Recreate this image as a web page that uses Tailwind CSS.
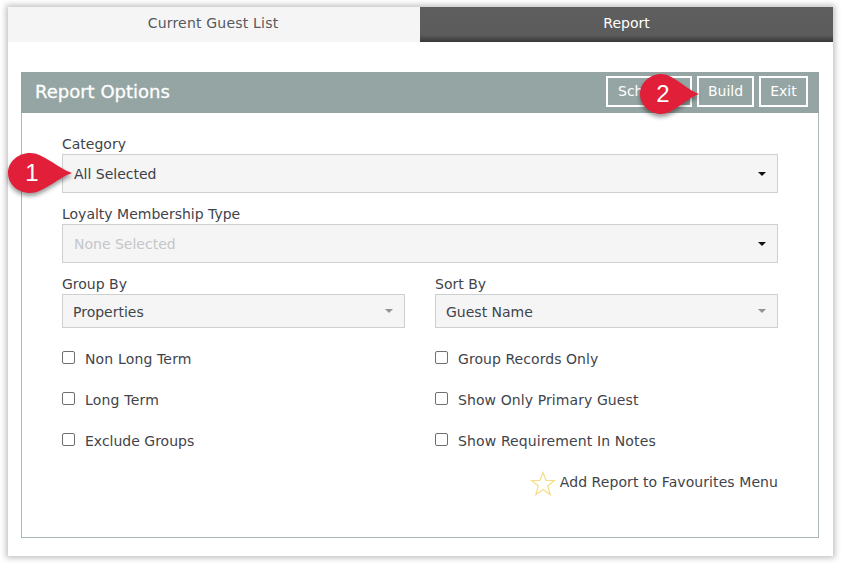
<!DOCTYPE html>
<html>
<head>
<meta charset="utf-8">
<script src="https://cdn.jsdelivr.net/npm/@tailwindcss/browser@4"></script>
</head>
<body class="bg-white w-[841px] h-[564px] overflow-hidden relative font-['DejaVu_Sans',sans-serif] text-[14px] text-[#3f444b]">
<div class="ml-[8px] mt-[7px] w-[825px] h-[549px] absolute bg-white shadow-[0_0_6px_2px_rgba(0,0,0,0.25)]">
  <div class="flex h-[35px]">
    <div class="w-[412px] bg-[#f5f5f5] flex items-center justify-center text-[#55595c] tracking-[0.2px] pb-[2px] pr-[2px]">Current Guest List</div>
    <div class="w-[413px] bg-[linear-gradient(#5e5e5e_0%,#5c5c5c_80%,#3a3637_100%)] flex items-center justify-center text-white pb-[2px]">Report</div>
  </div>
  <div class="ml-[13px] mr-[14px] mt-[30px] h-[466px] border border-[#a9b9b6] flex flex-col">
    <div class="h-[41px] -mx-px -mt-px bg-[#95a5a3] flex items-center pl-[14px] pr-[11px] shrink-0">
      <div class="text-[18px] text-white flex-1 pb-[2px] [-webkit-text-stroke:0.3px_white]">Report Options</div>
      <div class="flex gap-[5px] text-white -mt-[3px]">
        <div class="w-[86px] h-[31px] border-2 border-white flex items-center pl-[10px]">Schedule</div>
        <div class="w-[57px] h-[31px] border-2 border-white flex items-center justify-center">Build</div>
        <div class="w-[49px] h-[31px] border-2 border-white flex items-center justify-center">Exit</div>
      </div>
    </div>
    <div class="px-[40px] pt-[21px]">
      <div class="h-[20px] leading-[20px]">Category</div>
      <div class="h-[39px] bg-[#f5f5f5] border border-[#ccd0d0] flex items-center pl-[11px] pr-[11px] text-[#3a3f46] mb-[11px]">
        <span class="flex-1 pt-[2px]">All Selected</span>
        <svg width="8" height="4" viewBox="0 0 8 4"><path d="M0 0h8L4 4z" fill="#111"/></svg>
      </div>
      <div class="h-[20px] leading-[20px]">Loyalty Membership Type</div>
      <div class="h-[39px] bg-[#f5f5f5] border border-[#ccd0d0] flex items-center pl-[11px] pr-[11px] text-[#c4c6c8] mb-[11px]">
        <span class="flex-1 pt-[2px]">None Selected</span>
        <svg width="8" height="4" viewBox="0 0 8 4"><path d="M0 0h8L4 4z" fill="#111"/></svg>
      </div>
      <div class="grid grid-cols-[343px_343px] gap-x-[30px]">
        <div>
          <div class="h-[20px] leading-[20px]">Group By</div>
          <div class="h-[34px] bg-[#f5f5f5] border border-[#ccd0d0] flex items-center px-[10px] text-[#3f444b]">
            <span class="flex-1 pt-[2px]">Properties</span>
            <svg width="8" height="4" viewBox="0 0 8 4" class="-ml-[1px] mr-[1px]"><path d="M0 0h8L4 4z" fill="#8f9396"/></svg>
          </div>
        </div>
        <div>
          <div class="h-[20px] leading-[20px]">Sort By</div>
          <div class="h-[34px] bg-[#f5f5f5] border border-[#ccd0d0] flex items-center px-[10px] text-[#3f444b]">
            <span class="flex-1 pt-[2px]">Guest Name</span>
            <svg width="8" height="4" viewBox="0 0 8 4" class="-ml-[1px] mr-[1px]"><path d="M0 0h8L4 4z" fill="#8f9396"/></svg>
          </div>
        </div>
      </div>
      <div class="grid grid-cols-[343px_343px] gap-x-[30px] mt-[21px] auto-rows-[41px]">
        <div class="flex items-start h-[20px]"><span class="w-[13px] h-[13px] mt-[2px] border border-[#6f6f6f] rounded-[2px] bg-white"></span><span class="ml-[10px] tracking-[0.15px]">Non Long Term</span></div>
        <div class="flex items-start h-[20px]"><span class="w-[13px] h-[13px] mt-[2px] border border-[#6f6f6f] rounded-[2px] bg-white"></span><span class="ml-[10px] tracking-[0.06px]">Group Records Only</span></div>
        <div class="flex items-start h-[20px]"><span class="w-[13px] h-[13px] mt-[2px] border border-[#6f6f6f] rounded-[2px] bg-white"></span><span class="ml-[10px] tracking-[0.2px]">Long Term</span></div>
        <div class="flex items-start h-[20px]"><span class="w-[13px] h-[13px] mt-[2px] border border-[#6f6f6f] rounded-[2px] bg-white"></span><span class="ml-[10px] tracking-[0.09px]">Show Only Primary Guest</span></div>
        <div class="flex items-start h-[20px]"><span class="w-[13px] h-[13px] mt-[2px] border border-[#6f6f6f] rounded-[2px] bg-white"></span><span class="ml-[10px]">Exclude Groups</span></div>
        <div class="flex items-start h-[20px]"><span class="w-[13px] h-[13px] mt-[2px] border border-[#6f6f6f] rounded-[2px] bg-white"></span><span class="ml-[10px] tracking-[0.13px]">Show Requirement In Notes</span></div>
      </div>
      <div class="flex justify-end items-center h-[26px] -mt-[3px]">
        <svg width="26" height="26" viewBox="0 0 26 26" class="mr-[4px] mt-[3px]"><path d="M13 1.500l3 8h8.500l-6.800 5.200 2.500 8.800L13 18.400l-7.200 5.100 2.500-8.800L1.500 9.500H10z" fill="none" stroke="#f6dd84" stroke-width="1.200"/></svg>
        <span class="tracking-[0.08px]">Add Report to Favourites Menu</span>
      </div>
    </div>
  </div>
</div>
<svg class="absolute left-[5px] top-[151px]" width="70" height="50" viewBox="0 0 70 50" style="filter:drop-shadow(0 3px 2px rgba(0,0,0,.4))"><path d="M25 2C38 2 51 16 67 22 51 28 38 42 25 42 13 42 3 33 3 22S13 2 25 2z" fill="#e21f38"/></svg>
<div class="absolute left-[22px] top-[160px] w-[20px] text-center text-white text-[24px] leading-[26px] font-['Liberation_Sans',sans-serif]">1</div>
<svg class="absolute left-[637px] top-[72px]" width="70" height="50" viewBox="0 0 70 50" style="filter:drop-shadow(0 3px 2px rgba(0,0,0,.4))"><path d="M24 2C36 2 47 16 62 22 47 28 36 42 24 42 13 42 3 33 3 22S13 2 24 2z" fill="#e21f38"/></svg>
<div class="absolute left-[650px] top-[81px] w-[26px] text-center text-white text-[24px] leading-[26px] font-['Liberation_Sans',sans-serif]">2</div>
</body>
</html>
